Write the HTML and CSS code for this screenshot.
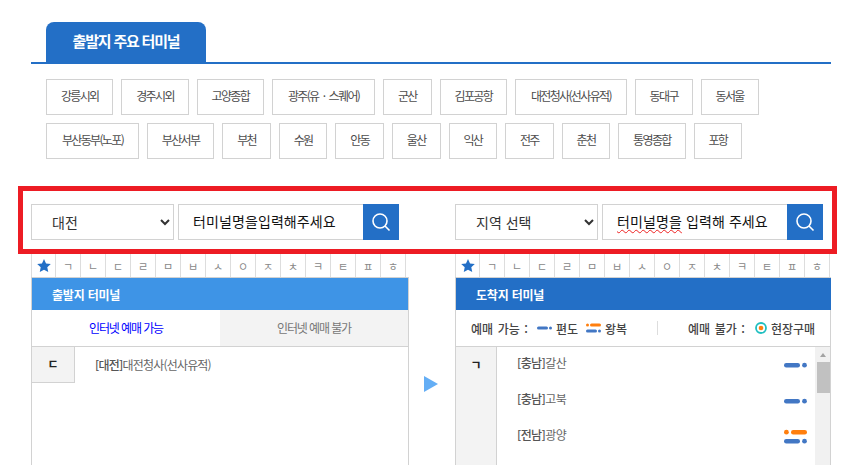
FILE: index.html
```html
<!DOCTYPE html>
<html lang="ko">
<head>
<meta charset="utf-8">
<title>터미널 선택</title>
<link rel="stylesheet" href="styles.css">
</head>
<body>
<div class="page">
  <div class="tabbar"><div class="tab">출발지 주요 터미널</div></div>
  <div class="chips">
    <a class="chip">강릉시외</a><a class="chip">경주시외</a><a class="chip">고양종합</a><a class="chip chip-wide">광주(유 · 스퀘어)</a><a class="chip">군산</a><a class="chip">김포공항</a><a class="chip chip-wide">대전청사(선사유적)</a><a class="chip">동대구</a><a class="chip">동서울</a>
    <a class="chip chip-wide">부산동부(노포)</a><a class="chip">부산서부</a><a class="chip">부천</a><a class="chip">수원</a><a class="chip">안동</a><a class="chip">울산</a><a class="chip">익산</a><a class="chip">전주</a><a class="chip">춘천</a><a class="chip">통영종합</a><a class="chip">포항</a>
  </div>

  <div class="search">
    <div class="group">
      <select class="sel"><option>대전</option></select>
      <div class="field">터미널명을입력해주세요</div>
      <button class="btn"><svg width="20" height="20" viewBox="0 0 20 20"><circle cx="9" cy="9" r="7" fill="none" stroke="#fff" stroke-width="1.6"/><path d="M14 14l4.5 4.5" stroke="#fff" stroke-width="1.6"/></svg></button>
    </div>
    <div class="group">
      <select class="sel"><option>지역 선택</option></select>
      <div class="field"><span class="typo">터미널명을</span> 입력해 주세요</div>
      <button class="btn"><svg width="20" height="20" viewBox="0 0 20 20"><circle cx="9" cy="9" r="7" fill="none" stroke="#fff" stroke-width="1.6"/><path d="M14 14l4.5 4.5" stroke="#fff" stroke-width="1.6"/></svg></button>
    </div>
  </div>

  <div class="boards">
    <section class="board board-left">
      <div class="index">
        <span class="idx"><svg width="14" height="13" viewBox="0 0 24 23"><path d="M12 0l3.6 7.8 8.4 1-6.200 5.800 1.700 8.400L12 18.800 4.500 23l1.700-8.400L0 8.800l8.400-1z" fill="#236fc6"/></svg></span><span class="idx">ㄱ</span><span class="idx">ㄴ</span><span class="idx">ㄷ</span><span class="idx">ㄹ</span><span class="idx">ㅁ</span><span class="idx">ㅂ</span><span class="idx">ㅅ</span><span class="idx">ㅇ</span><span class="idx">ㅈ</span><span class="idx">ㅊ</span><span class="idx">ㅋ</span><span class="idx">ㅌ</span><span class="idx">ㅍ</span><span class="idx">ㅎ</span>
      </div>
      <div class="box">
        <div class="head head-light">출발지 터미널</div>
        <div class="tabs">
          <div class="subtab on">인터넷 예매 가능</div>
          <div class="subtab">인터넷 예매 불가</div>
        </div>
        <div class="left-list">
          <div class="letter-cell">ㄷ</div>
          <div class="left-item"><b>[대전]</b>대전청사(선사유적)</div>
        </div>
      </div>
    </section>

    <div class="arrow"><svg width="14" height="16" viewBox="0 0 14 16"><path d="M0 0l14 8-14 8z" fill="#64aef5"/></svg></div>

    <section class="board board-right">
      <div class="index">
        <span class="idx"><svg width="14" height="13" viewBox="0 0 24 23"><path d="M12 0l3.6 7.8 8.4 1-6.200 5.800 1.700 8.400L12 18.800 4.500 23l1.700-8.400L0 8.800l8.400-1z" fill="#236fc6"/></svg></span><span class="idx">ㄱ</span><span class="idx">ㄴ</span><span class="idx">ㄷ</span><span class="idx">ㄹ</span><span class="idx">ㅁ</span><span class="idx">ㅂ</span><span class="idx">ㅅ</span><span class="idx">ㅇ</span><span class="idx">ㅈ</span><span class="idx">ㅊ</span><span class="idx">ㅋ</span><span class="idx">ㅌ</span><span class="idx">ㅍ</span><span class="idx">ㅎ</span>
      </div>
      <div class="box">
        <div class="head head-dark">도착지 터미널</div>
        <div class="legend">
          <span class="lg-label">예매 가능 :</span>
          <svg class="lg-one" width="15" height="4" viewBox="0 0 15 4"><rect y=".5" width="11" height="3" rx="1.500" fill="#4277c4"/><circle cx="13.500" cy="2" r="1.500" fill="#4277c4"/></svg>
          <span class="lg-text">편도</span>
          <svg class="lg-two" width="15" height="10" viewBox="0 0 15 10"><circle cx="1.500" cy="2" r="1.500" fill="#ff7f0e"/><rect x="4" y=".5" width="11" height="3" rx="1.500" fill="#ff7f0e"/><rect y="6.500" width="11" height="3" rx="1.500" fill="#4277c4"/><circle cx="13.500" cy="8" r="1.500" fill="#4277c4"/></svg>
          <span class="lg-text">왕복</span>
          <i class="lg-div"></i>
          <span class="lg-label">예매 불가 :</span>
          <svg class="lg-site" width="12" height="12" viewBox="0 0 12 12"><circle cx="6" cy="6" r="5" fill="#fff" stroke="#1fbfc0" stroke-width="1.800"/><circle cx="6" cy="6" r="2.300" fill="#ff7f0e"/></svg>
          <span class="lg-text">현장구매</span>
        </div>
        <div class="right-list">
          <div class="letter-col">ㄱ</div>
          <div class="rows">
            <div class="row"><span class="row-name"><b>[충남]</b>갈산</span><svg width="23" height="18" viewBox="0 0 23 18"><rect y="7" width="16" height="4.500" rx="2.200" fill="#4277c4"/><circle cx="20.500" cy="9.200" r="2.400" fill="#4277c4"/></svg></div>
            <div class="row"><span class="row-name"><b>[충남]</b>고북</span><svg width="23" height="18" viewBox="0 0 23 18"><rect y="7" width="16" height="4.500" rx="2.200" fill="#4277c4"/><circle cx="20.500" cy="9.200" r="2.400" fill="#4277c4"/></svg></div>
            <div class="row"><span class="row-name"><b>[전남]</b>광양</span><svg width="23" height="18" viewBox="0 0 23 18"><circle cx="2.400" cy="4.200" r="2.400" fill="#ff7f0e"/><rect x="7" y="2" width="16" height="4.500" rx="2.200" fill="#ff7f0e"/><rect y="11" width="16" height="4.500" rx="2.200" fill="#4277c4"/><circle cx="20.500" cy="13.200" r="2.400" fill="#4277c4"/></svg></div>
          </div>
          <div class="scroll">
            <i class="scroll-up"></i>
            <i class="scroll-thumb"></i>
          </div>
        </div>
      </div>
    </section>
  </div>
</div>
</body>
</html>
```

FILE: styles.css
```css
* { box-sizing: border-box; }
html, body {
  margin: 0;
  height: 465px;
  overflow: hidden;
  background: #fff;
}
body {
  font-family: "Noto Sans CJK KR", "Noto Sans", sans-serif;
  font-size: 12px;
  color: #444;
}
.page {
  width: 853px;
  padding: 22px 0 0 31px;
}

/* top tab */
.tabbar {
  width: 800px;
  height: 42px;
  padding-left: 15px;
  border-bottom: 2px solid #236fc6;
}
.tab {
  width: 160px;
  height: 40px;
  border-radius: 8px 8px 0 0;
  background: #236fc6;
  color: #fff;
  font-size: 15px;
  font-weight: 700;
  letter-spacing: -1.2px;
  line-height: 38px;
  text-align: center;
}

/* terminals */
.chips {
  width: 800px;
  padding: 15px 0 0 15px;
  display: flex;
  flex-wrap: wrap;
  gap: 8px;
}
.chip {
  height: 36px;
  padding: 0 13.9px;
  border: 1px solid #d2d2d2;
  color: #4d4d4d;
  font-size: 12px;
  letter-spacing: -1.65px;
  word-spacing: 2.5px;
  line-height: 32px;
  white-space: nowrap;
}
.chip-wide {
  padding: 0 14.9px;
}

/* search */
.search {
  width: 819px;
  height: 68px;
  margin: 27px 0 0 -13px;
  padding: 13px 9px 0 8px;
  border: 5px solid #ed1c24;
  display: flex;
  justify-content: space-between;
}
.group {
  width: 368px;
  height: 36px;
  display: flex;
}
.sel {
  width: 143px;
  height: 36px;
  margin: 0 4px 0 0;
  padding-left: 16px;
  border: 1px solid #d2d2d2;
  border-radius: 0;
  background: #fff;
  color: #333;
  font: 14px "Noto Sans CJK KR", sans-serif;
}
.field {
  width: 185px;
  height: 36px;
  padding-left: 14px;
  border: 1px solid #d2d2d2;
  border-right: 0;
  color: #111;
  font-size: 14px;
  letter-spacing: .1px;
  line-height: 32px;
  white-space: nowrap;
}
.typo {
  text-decoration: underline wavy #e22;
  text-decoration-thickness: 1px;
  text-underline-offset: 2px;
}
.btn {
  width: 36px;
  height: 36px;
  padding: 0;
  border: 0;
  background: #236fc6;
  display: flex;
  align-items: center;
  justify-content: center;
}

/* boards */
.boards {
  display: flex;
}
.board-left { width: 378px; }
.board-right { width: 376px; }
.arrow {
  width: 46px;
  padding: 122px 0 0 15px;
  line-height: 0;
}
.index {
  height: 24px;
  display: flex;
  border-bottom: 1px solid #d2d2d2;
}
.idx {
  width: 25px;
  border-right: 1px solid #ddd;
  display: flex;
  align-items: center;
  justify-content: center;
  color: #888;
  font-size: 11px;
}
.idx:first-child {
  border-left: 1px solid #ddd;
}
.box {
  height: 220px;
  border: 1px solid #d2d2d2;
  border-top: 0;
}
.head {
  height: 32px;
  padding-left: 20px;
  color: #fff;
  font-size: 12px;
  font-weight: 700;
  letter-spacing: -.2px;
  line-height: 33px;
}
.head-light { background: #3e94e6; }
.head-dark {
  margin-right: -1px;
  background: #236fc6;
}

/* left */
.tabs {
  height: 37px;
  display: flex;
  border-bottom: 1px solid #d2d2d2;
}
.subtab {
  flex: 1;
  background: #f3f3f3;
  color: #777;
  font-size: 12px;
  letter-spacing: -1.1px;
  line-height: 35px;
  text-align: center;
}
.subtab.on {
  background: #fff;
  color: #00f;
}
.left-list {
  display: flex;
}
.letter-cell {
  width: 43px;
  height: 36px;
  border-right: 1px solid #d2d2d2;
  border-bottom: 1px solid #d2d2d2;
  background: #f3f3f3;
  color: #222;
  font-size: 12px;
  font-weight: 700;
  line-height: 34px;
  text-align: center;
}
.left-item {
  padding: 8px 0 0 20px;
  color: #666;
  font-size: 12px;
  letter-spacing: -.8px;
  line-height: 20px;
}
.left-item b, .row-name b {
  color: #555;
  font-weight: 500;
}

/* legend */
.legend {
  height: 37px;
  padding-left: 15px;
  border-bottom: 1px solid #d2d2d2;
  display: flex;
  align-items: center;
}
.lg-label, .lg-text {
  color: #444;
  font-size: 12px;
  font-weight: 500;
  white-space: nowrap;
}
.lg-label { word-spacing: 1.2px; }
.lg-one { margin-left: 9px; }
.lg-two { margin-left: 8px; }
.lg-text { margin-left: 4px; }
.lg-div {
  width: 1px;
  height: 14px;
  margin: 0 30px;
  background: #ddd;
}
.lg-site { margin-left: 10px; }

/* right list */
.right-list {
  height: 118px;
  display: flex;
}
.letter-col {
  width: 41px;
  border-right: 1px solid #d2d2d2;
  background: #f3f3f3;
  color: #222;
  font-size: 12px;
  font-weight: 700;
  line-height: 36px;
  text-align: center;
}
.rows {
  flex: 1;
  padding: 0 8px 0 20px;
}
.row {
  height: 36px;
  display: flex;
  align-items: center;
  justify-content: space-between;
}
.row-name {
  margin-bottom: 6px;
  color: #666;
  font-size: 12px;
  letter-spacing: -.6px;
}
.scroll {
  width: 15px;
  background: #f1f1f1;
  display: flex;
  flex-direction: column;
  align-items: flex-end;
}
.scroll-up {
  width: 0;
  height: 0;
  margin: 6px 4px 5px 0;
  border: 3.5px solid transparent;
  border-top: 0;
  border-bottom: 4px solid #a3a3a3;
}
.scroll-thumb {
  width: 13px;
  height: 31px;
  background: #c1c1c1;
}
```
